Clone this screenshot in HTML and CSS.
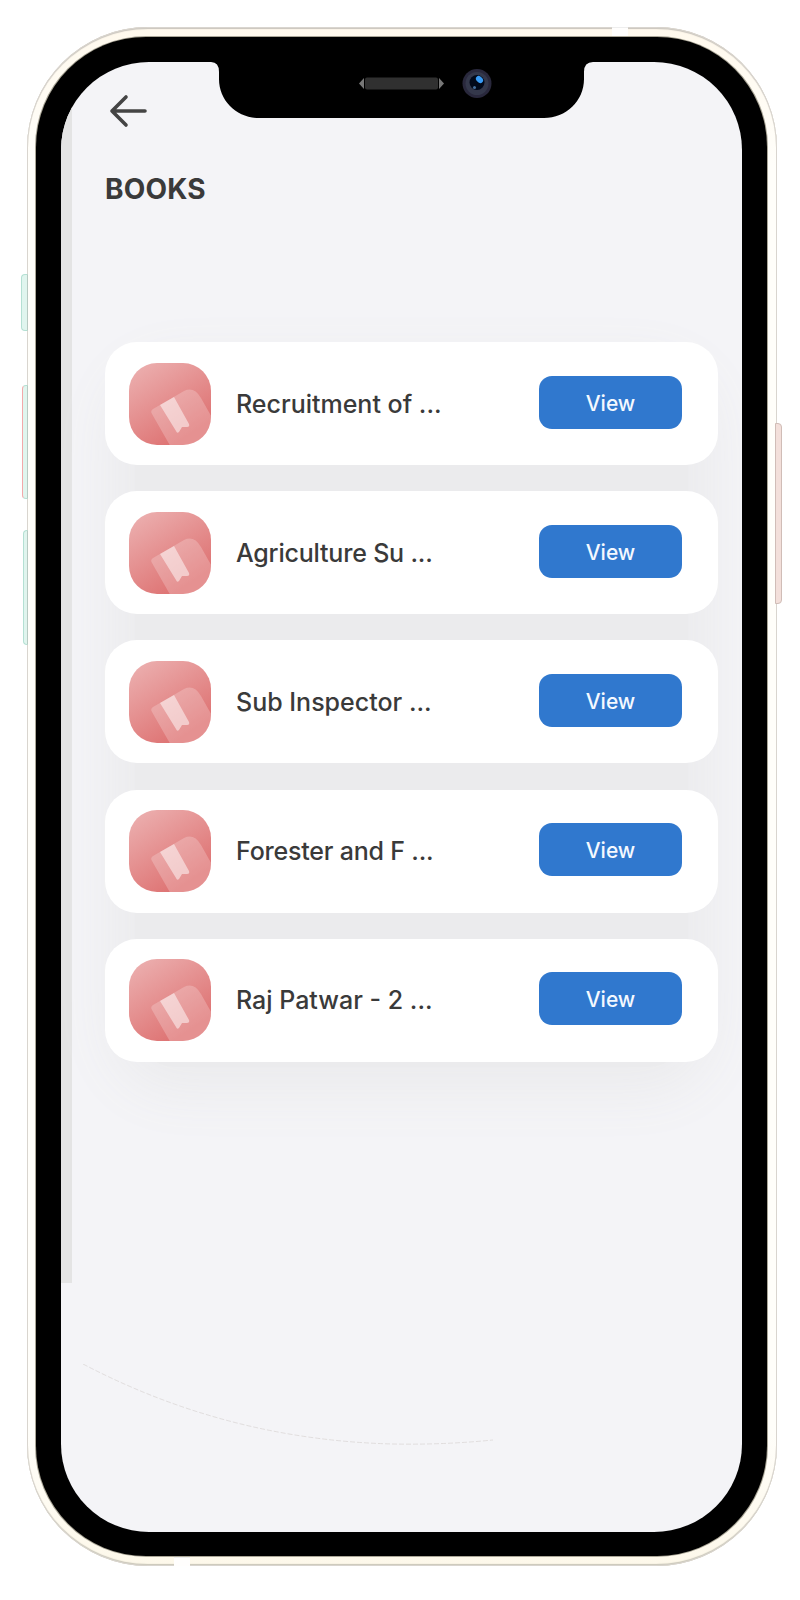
FILE: index.html
```html
<!DOCTYPE html>
<html lang="en">
<head>
<meta charset="utf-8">
<title>Books</title>
<link rel="stylesheet" href="styles.css">
</head>
<body>
<svg class="defs" width="0" height="0">
  <defs>
    <linearGradient id="tile" x1="0.1" y1="0" x2="0.75" y2="1">
      <stop offset="0" stop-color="#ecb0b0"/>
      <stop offset="0.9" stop-color="#de7373"/>
    </linearGradient>
    <clipPath id="tile-clip"><rect width="82" height="82" rx="28"/></clipPath>
    <symbol id="book" viewBox="0 0 82 82">
      <g clip-path="url(#tile-clip)">
        <rect width="82" height="82" fill="url(#tile)"/>
        <path d="M24 46Q21 48 23 51L43 86H86V60L72 35Q65 23 55 28Z" fill="#fff" fill-opacity=".22"/>
        <path d="M31 42L45 34L60 61Q61 64 58 64L53 64L50 69Q48 71 47 68Z" fill="#fff" fill-opacity=".5"/>
      </g>
    </symbol>
  </defs>
</svg>
<div class="phone">
  <i class="key mute"></i><i class="key up"></i><i class="key down"></i><i class="key power"></i>
  <i class="band band-top"></i><i class="band band-bottom"></i>
  <div class="bezel">
    <main class="screen">
      <div class="edge"></div>
      <svg class="notch" viewBox="0 0 385 57" width="385" height="57">
        <path d="M0 0H385V1H383Q374 1 374 11V18C374 40 356 57 334 57H49C27 57 9 40 9 18V11Q9 1 1 1H0Z" fill="#000"/>
        <path d="M149 22.500L154 17V28Z" fill="#777"/>
        <path d="M234 22.500L229 17V28Z" fill="#777"/>
        <rect x="155" y="16.500" width="73" height="12" rx="2" fill="#303030"/>
        <circle cx="267" cy="22.500" r="14.500" fill="#29283c"/>
        <circle cx="267" cy="22.500" r="11.500" fill="#34384b"/>
        <circle cx="267" cy="21.500" r="7.500" fill="#020a1b"/>
        <ellipse cx="269.500" cy="18.500" rx="4" ry="3" transform="rotate(45 269.500 18.500)" fill="#389bf5"/>
        <circle cx="264.500" cy="26.500" r="1.500" fill="#456f9d"/>
      </svg>
      <svg class="arc" viewBox="0 0 520 90" width="520" height="90">
        <path d="M0 0Q145 76 310 80Q360 81 410 76" fill="none" stroke="#d3cecd" stroke-width=".6" stroke-dasharray="5 2"/>
      </svg>
      <header class="top">
        <svg class="back" viewBox="0 0 40 34" width="40" height="34">
          <path d="M36 17H3M17 3L3 17L17 31" fill="none" stroke="#444" stroke-width="3.600" stroke-linecap="round" stroke-linejoin="round"/>
        </svg>
        <h1 class="title">BOOKS</h1>
      </header>
      <section class="list">
        <article class="card"><svg class="tile"><use href="#book"/></svg><span class="name">Recruitment of ...</span><button class="view">View</button></article>
        <article class="card"><svg class="tile"><use href="#book"/></svg><span class="name tight">Agriculture Su ...</span><button class="view">View</button></article>
        <article class="card"><svg class="tile"><use href="#book"/></svg><span class="name">Sub Inspector ...</span><button class="view">View</button></article>
        <article class="card"><svg class="tile"><use href="#book"/></svg><span class="name tight">Forester and F ...</span><button class="view">View</button></article>
        <article class="card"><svg class="tile"><use href="#book"/></svg><span class="name">Raj Patwar - 2 ...</span><button class="view">View</button></article>
      </section>
    </main>
  </div>
</div>
</body>
</html>
```
FILE: styles.css
```css
* { box-sizing: border-box; }
body { margin: 0; padding: 27px 0 0 27px; background: #fff; font-family: Inter, "Open Sans", sans-serif; color: #3a3a3a; }
.defs { position: absolute; }
.phone {
  position: relative; width: 750px; height: 1539px; padding: 10px 10px 10px 9px; border-radius: 121px;
  background: linear-gradient(#fff9ed, #fffefa 9%, #fffefa 91%, #fdf8ea);
  box-shadow: inset 0 0 0 1px #d9d5cf, inset 0 2px 1px #c9c4bc, inset 0 -2px 1px #c9c6b8;
}
.bezel { height: 1519px; padding: 25px; border-radius: 110px; background: #000; box-shadow: 0 0 0 1px #aaa697; }
.screen { position: relative; height: 1470px; border-radius: 88px; background: #f4f4f7; overflow: hidden; }
.edge { position: absolute; left: 0; top: 0; width: 11px; height: 1221px; background: #e4e4e4; }
.notch { position: absolute; left: 149px; top: -1px; }
.arc { position: absolute; left: 22px; top: 1302px; }
.top { display: flex; flex-direction: column; align-items: flex-start; height: 280px; padding: 32px 0 0 44px; }
.back { margin-left: 4px; }
.title { margin: 44px 0 0; font-size: 28px; line-height: 34px; font-weight: 700; letter-spacing: .200px; }
.list {
  position: relative; display: flex; flex-direction: column; gap: 26.200px; margin: 0 24px 0 44px;
  border-radius: 50px;
}
.card {
  position: relative; display: flex; align-items: center; height: 123px; padding: 0 36px 0 24px;
  border-radius: 32px; background: #fff;
}
.list::before {
  content: ""; position: absolute; inset: 45px 30px -5px; border-radius: 40px;
  background: #ebebed; box-shadow: 0 0 55px 25px #ebebed;
}
.tile { width: 82px; height: 82px; flex: none; }
.name { flex: 1; padding-left: 25px; font-size: 25px; line-height: 34px; font-weight: 500; white-space: nowrap; }
.tight { letter-spacing: -.200px; }
.view {
  width: 143px; height: 53px; padding: 2px 0 0; border: 0; border-radius: 13px; margin-top: -3px;
  background: #3078ce; color: #f4f9ff; font: 500 21px/51px Inter, sans-serif;
}
.key { position: absolute; border: 1px solid #b4e0d3; border-right-color: #b7c9c1; background: #e0f5ee; border-radius: 4px 0 0 4px; }
.mute { left: -6px; top: 247px; width: 7px; height: 57px; }
.up { left: -5px; top: 358px; width: 6px; height: 114px; border-left-color: #f3a9aa; }
.down { left: -4px; top: 503px; width: 5px; height: 115px; }
.power { left: 748px; top: 396px; width: 7px; height: 181px; background: #f3dfda; border-color: #d0bdb7; border-radius: 0 4px 4px 0; }
.band { position: absolute; width: 16px; height: 9px; background: #fffefd; border-top: 1px solid #eee; }
.band-top { left: 585px; top: 0; }
.band-bottom { left: 147px; bottom: 0; }
```
